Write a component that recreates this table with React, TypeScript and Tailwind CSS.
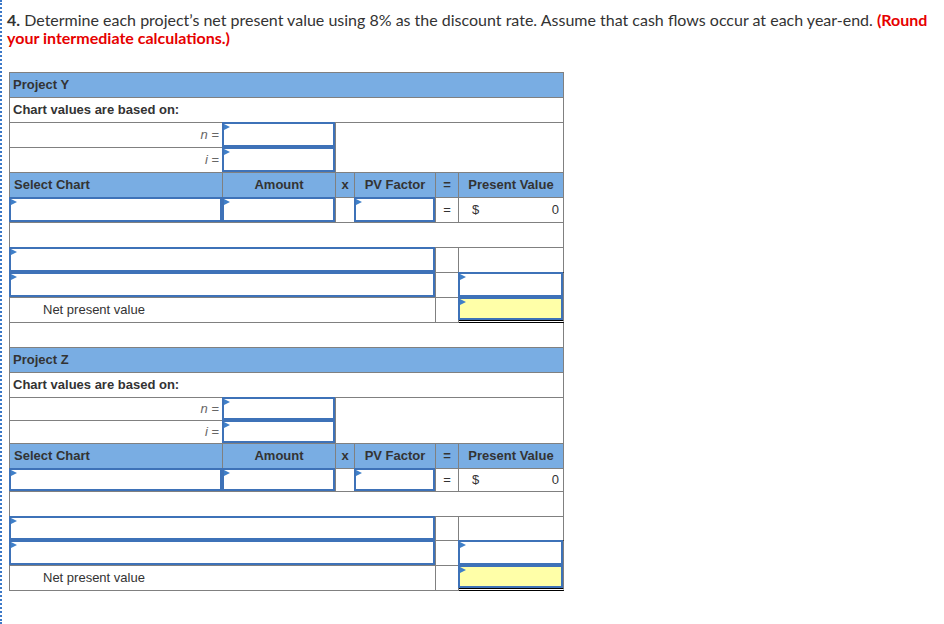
import clsx from 'clsx';

const line = 'border-[#808080]';

// blue input box that sits on the grid lines of its cell
const Field = ({ yellow = false }: { yellow?: boolean }) => (
  <div
    className={clsx(
      'relative -ml-px -mt-px h-[calc(100%+1px)] w-[calc(100%+1px)] border-2 border-[#3e72b8]',
      yellow ? 'bg-[#ffffa8]' : 'bg-white'
    )}
  >
    <span className="absolute left-0 top-0 h-0 w-0 border-y-[3px] border-l-[6px] border-y-transparent border-l-[#3f7fc8]" />
  </div>
);

const Cell = ({ className, children }: { className?: string; children?: React.ReactNode }) => (
  <div className={clsx('flex items-center border-r border-b', line, className)}>{children}</div>
);

const Head = ({ className, children }: { className?: string; children?: React.ReactNode }) => (
  <Cell className={clsx('bg-[#79ade3] font-bold', className)}>{children}</Cell>
);

type SectionProps = {
  title: string;
  rows: string;
  spacer?: boolean;
};

const Section = ({ title, rows, spacer }: SectionProps) => (
  <div className={clsx('grid grid-cols-[213px_113px_19px_81px_23px_105px]', rows)}>
    {/* title + chart basis */}
    <Head className="col-span-6 pl-[3px]">{title}</Head>
    <Cell className="col-span-6 pl-[3px] font-bold">Chart values are based on:</Cell>

    {/* n and i */}
    <Cell className="justify-end pr-[3px] text-[#666]">
      <i>n</i>&nbsp;=
    </Cell>
    <Cell>
      <Field />
    </Cell>
    <Cell className="col-span-4 row-span-2" />
    <Cell className="justify-end pr-[3px] text-[#666]">
      <i>i</i>&nbsp;=
    </Cell>
    <Cell>
      <Field />
    </Cell>

    {/* column headers */}
    <Head className="pl-[4px]">Select Chart</Head>
    <Head className="justify-center">Amount</Head>
    <Head className="justify-center">x</Head>
    <Head className="justify-center">PV Factor</Head>
    <Head className="justify-center">=</Head>
    <Head className="justify-center">Present Value</Head>

    {/* chart row */}
    <Cell>
      <Field />
    </Cell>
    <Cell>
      <Field />
    </Cell>
    <Cell />
    <Cell>
      <Field />
    </Cell>
    <Cell className="justify-center">=</Cell>
    <Cell className="justify-between pl-[13px] pr-[4px]">
      <span>$</span>
      <span>0</span>
    </Cell>

    <Cell className="col-span-6" />

    {/* sum rows */}
    <Cell className="col-span-4">
      <Field />
    </Cell>
    <Cell />
    <Cell className="border-b-black" />

    <Cell className="col-span-4">
      <Field />
    </Cell>
    <Cell />
    <Cell>
      <Field />
    </Cell>

    <Cell className="col-span-4 pl-[33px]">Net present value</Cell>
    <Cell />
    <Cell className="items-start border-b-[3px] border-double border-b-black">
      <Field yellow />
    </Cell>

    {spacer && <Cell className="col-span-6" />}
  </div>
);

export default function App() {
  return (
    <div className="min-h-[624px] border-l-2 border-dotted border-[#3b78c8] bg-white">
      <p className="whitespace-nowrap pl-[5px] pt-[11px] font-['Lato',sans-serif] text-[16px] leading-[18px] text-[#333]">
        <b>4.</b> Determine each project’s net present value using 8% as the discount rate. Assume that cash flows
        occur at each year-end. <b className="text-[#e60000]">(Round</b>
        <br />
        <b className="text-[#e60000]">your intermediate calculations.)</b>
      </p>

      <div
        className={clsx(
          "ml-[7px] mt-[25px] w-[555px] border-l border-t font-['Liberation_Sans',Arial,sans-serif] text-[13px] text-[#333]",
          line
        )}
      >
        <Section title="Project Y" rows="grid-rows-[25px_25px_25px_25px_25px_25px_25px_25px_25px_25px_25px]" spacer />
        <Section title="Project Z" rows="grid-rows-[25px_25px_23px_23px_25px_23px_25px_24px_25px_25px]" />
      </div>
    </div>
  );
}
